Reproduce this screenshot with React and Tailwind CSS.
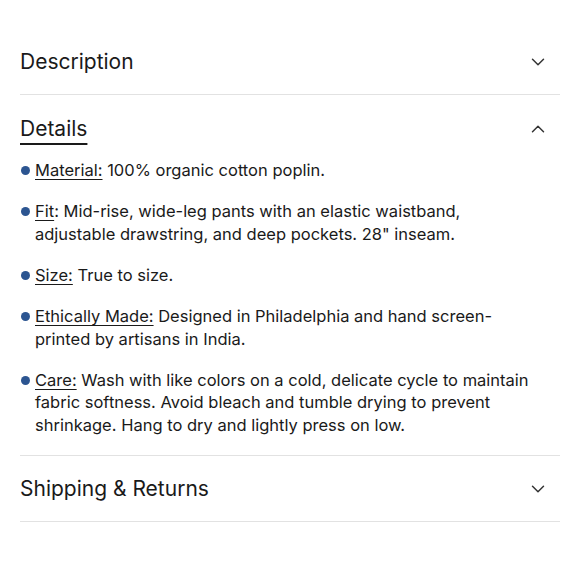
import { ChevronDown, ChevronUp } from 'lucide-react'

const details = [
  { label: 'Material:', text: ' 100% organic cotton poplin.' },
  {
    label: 'Fit',
    text: ': Mid-rise, wide-leg pants with an elastic waistband, adjustable drawstring, and deep pockets. 28" inseam.',
  },
  { label: 'Size:', text: ' True to size.' },
  {
    label: 'Ethically Made:',
    text: ' Designed in Philadelphia and hand screen-printed by artisans in India.',
  },
  {
    label: 'Care:',
    text: ' Wash with like colors on a cold, delicate cycle to maintain fabric softness. Avoid bleach and tumble drying to prevent shrinkage. Hang to dry and lightly press on low.',
  },
]

function Row({ title }) {
  return (
    <div className="flex items-center justify-between h-[66px] border-b border-[#e2e2e2]">
      <span className="text-[21px] text-[#1a1a1a]">{title}</span>
      <ChevronDown className="w-[22px] h-[22px] mr-[11px] text-[#333]" strokeWidth={1.6} />
    </div>
  )
}

export default function App() {
  return (
    <div className="w-[580px] h-[580px] bg-white px-5 pt-[29px] font-['Inter',sans-serif]">
      <Row title="Description" />

      {/* Details (open) */}
      <div className="border-b border-[#e2e2e2] pb-[19px]">
        <div className="flex items-center justify-between h-[64px] pt-[3px]">
          <span className="text-[21px] text-[#1a1a1a] underline underline-offset-[7px] decoration-[1.5px]">
            Details
          </span>
          <ChevronUp className="w-[22px] h-[22px] mr-[11px] text-[#333]" strokeWidth={1.6} />
        </div>
        <ul className="flex flex-col gap-[18.7px] text-[16.5px] leading-[22.5px] text-[#1a1a1a]">
          {details.map((d) => (
            <li key={d.label} className="flex">
              <span className="w-[9px] h-[9px] mt-[7px] ml-[1px] mr-[5px] shrink-0 rounded-full bg-[#2c5591]" />
              <p className="w-[504px]">
                <span className="underline underline-offset-[3px]">{d.label}</span>
                {d.text}
              </p>
            </li>
          ))}
        </ul>
      </div>

      <Row title="Shipping & Returns" />
    </div>
  )
}
